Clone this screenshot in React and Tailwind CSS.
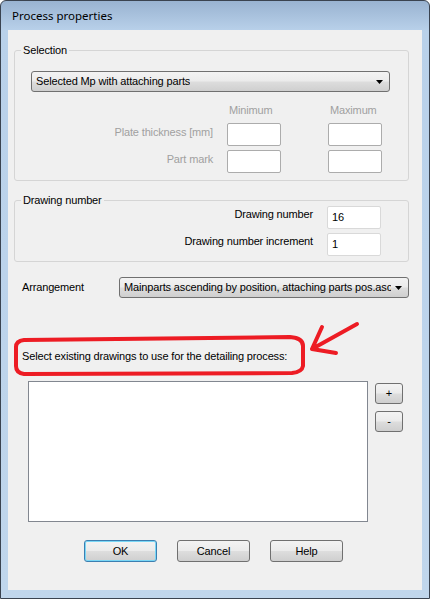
import React from "react";

const btnFace =
  "bg-[linear-gradient(#f3f3f3_0%,#ebebeb_48%,#dddddd_52%,#cfcfcf_100%)]";

const WinButton = ({ children, focused, className = "" }) => (
  <div
    className={`flex items-center justify-center rounded-[3px] border text-[11px] text-black ${btnFace} ${
      focused
        ? "border-[#3c7fb1] shadow-[inset_0_0_0_1px_#7ad7f6]"
        : "border-[#707070]"
    } ${className}`}
  >
    {children}
  </div>
);

const Combo = ({ text, className = "" }) => (
  <div
    className={`flex h-[21px] items-center justify-between gap-[4px] rounded-[3px] border border-[#707070] pl-[4px] pr-[6px] text-[11px] text-black ${btnFace} ${className}`}
  >
    <span className="min-w-0 overflow-hidden whitespace-nowrap">{text}</span>
    <svg className="shrink-0" width="7" height="4" viewBox="0 0 7 4">
      <path d="M0 0h7L3.5 4z" fill="#000" />
    </svg>
  </div>
);

const TextBox = ({ value, light }) => (
  <div
    className={`flex h-[23px] w-[54px] items-center rounded-[2px] border bg-white pl-[4px] text-[11px] text-black ${
      light ? "border-[#d9d9d9]" : "border-[#acacac]"
    }`}
  >
    {value}
  </div>
);

const GroupBox = ({ title, className = "", children }) => (
  <fieldset
    className={`ml-[6px] w-[395px] rounded-[3px] border border-[#d5d5d5] ${className}`}
  >
    <legend className="ml-[6px] px-[2px] text-[11px] leading-[13px] text-black">
      {title}
    </legend>
    {children}
  </fieldset>
);

export default function App() {
  return (
    <div className="relative flex h-[599px] w-[430px] flex-col rounded-t-[6px] border border-[#3a4350] bg-[linear-gradient(#99b3d1_0px,#b9d1ea_30px,#c0d6ec_100%)] font-['Liberation_Sans',Arial,sans-serif] tracking-[-0.15px]">
      <div className="flex h-[29px] items-center pl-[11px] font-['Noto_Sans',sans-serif] text-[11.5px] tracking-normal text-black">
        Process properties
      </div>

      <div className="mx-[7px] mb-[8px] flex flex-1 flex-col bg-[#f0f0f0]">
        <GroupBox title="Selection" className="mt-[14px] h-[137px]">
          <Combo
            text="Selected Mp with attaching parts"
            className="ml-[16px] mt-[14px] w-[359px]"
          />
          <div className="mt-[12px] flex text-[11px] leading-[13px] text-[#a0a0a0]">
            <div className="ml-[213px] w-[101px] pl-[1px]">Minimum</div>
            <div className="pl-[1px]">Maximum</div>
          </div>
          <div className="mt-[6px] flex flex-col gap-[4px]">
            {["Plate thickness [mm]", "Part mark"].map((label) => (
              <div key={label} className="flex">
                <div className="w-[198px] pt-[3px] text-right text-[11px] leading-[13px] text-[#a0a0a0]">
                  {label}
                </div>
                <div className="ml-[14px]">
                  <TextBox />
                </div>
                <div className="ml-[47px]">
                  <TextBox />
                </div>
              </div>
            ))}
          </div>
        </GroupBox>

        <GroupBox title="Drawing number" className="mt-[13px] h-[68px]">
          <div className="-mt-[1px] flex flex-col gap-[4px]">
            {[
              ["Drawing number", "16"],
              ["Drawing number increment", "1"],
            ].map(([label, value]) => (
              <div key={label} className="flex">
                <div className="w-[298px] pt-[2px] text-right text-[11px] leading-[13px] text-black">
                  {label}
                </div>
                <div className="ml-[14px]">
                  <TextBox value={value} light />
                </div>
              </div>
            ))}
          </div>
        </GroupBox>

        <div className="mt-[15px] flex items-center">
          <div className="ml-[14px] w-[97px] text-[11px] leading-[13px] text-black">
            Arrangement
          </div>
          <Combo
            text="Mainparts ascending by position, attaching parts pos.asc"
            className="w-[290px]"
          />
        </div>

        <div className="ml-[14px] mt-[52px] text-[11px] leading-[13px] text-black">
          Select existing drawings to use for the detailing process:
        </div>

        <div className="mt-[18px] flex items-start">
          <div className="ml-[20px] h-[141px] w-[340px] border border-[#828790] bg-white" />
          <div className="ml-[7px] mt-[2px] flex flex-col gap-[7px]">
            <WinButton className="h-[21px] w-[28px]">+</WinButton>
            <WinButton className="h-[21px] w-[28px]">-</WinButton>
          </div>
        </div>

        <div className="ml-[76px] mt-[18px] flex gap-[20px]">
          <WinButton focused className="h-[22px] w-[73px]">
            OK
          </WinButton>
          <WinButton className="h-[22px] w-[73px]">Cancel</WinButton>
          <WinButton className="h-[22px] w-[73px]">Help</WinButton>
        </div>
      </div>

      {/* red annotation drawn on top of the screenshot */}
      <svg
        className="pointer-events-none absolute left-[-1px] top-[-1px]"
        width="430"
        height="599"
        viewBox="0 0 430 599"
      >
        <path
          d="M24 340 L290 337 Q303 338 303 346 L303 366 Q302 372 292 373 L24 374 Q16 373 16 366 L16 347 Q16 341 24 340 Z"
          fill="none"
          stroke="#ed1c24"
          strokeWidth="4"
          strokeLinejoin="round"
        />
        <path
          d="M357 324 L312 349 M312 349 L322 327 M312 349 L336 353"
          fill="none"
          stroke="#ed1c24"
          strokeWidth="4"
          strokeLinecap="round"
        />
      </svg>
    </div>
  );
}
